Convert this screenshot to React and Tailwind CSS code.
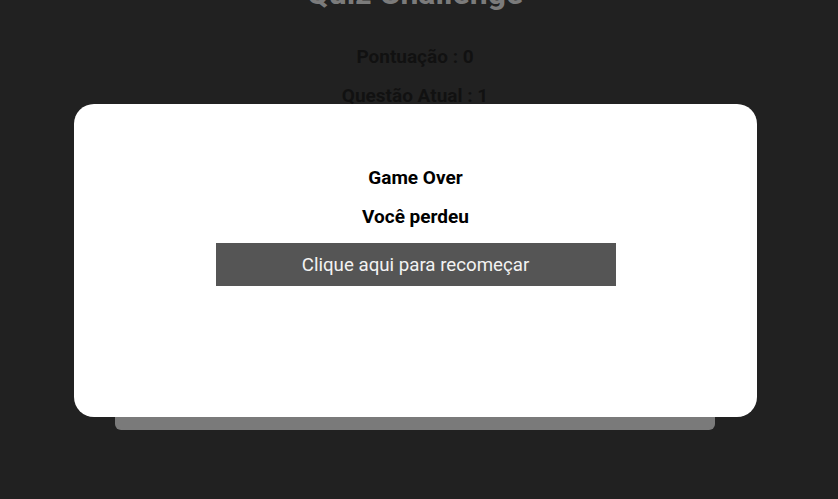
export default function App() {
  return (
    <div
      className="relative h-[499px] w-[838px] overflow-hidden bg-[#212121]"
      style={{ fontFamily: "Roboto, 'Liberation Sans', sans-serif" }}
    >
      <div className="flex w-[830px] flex-col items-center">
        <h1 className="mt-[-25px] text-[32px] font-bold leading-[37px] text-[#7b7b7b]">
          Quiz Challenge
        </h1>
        <p className="mt-[34px] text-[19px] font-bold leading-[22px] text-[#111111]">
          Pontuação : 0
        </p>
        <p className="mt-[17px] text-[19px] font-bold leading-[22px] text-[#111111]">
          Questão Atual : 1
        </p>
        <div className="mt-[10px] h-[313px] w-[600px] rounded-[6px] bg-[#7a7a7a]"></div>
      </div>

      <div className="absolute left-[74px] top-[104px] flex h-[313px] w-[683px] flex-col items-center rounded-[20px] bg-white pt-[63px]">
        <p className="text-[19px] font-bold leading-[22px] text-black">Game Over</p>
        <p className="mt-[17px] text-[19px] font-bold leading-[22px] text-black">Você perdeu</p>
        <button className="mt-[15px] flex h-[43px] w-[400px] items-center justify-center bg-[#555555] text-[18.7px] leading-[22px] text-[#f2f2f2]">
          Clique aqui para recomeçar
        </button>
      </div>
    </div>
  );
}
